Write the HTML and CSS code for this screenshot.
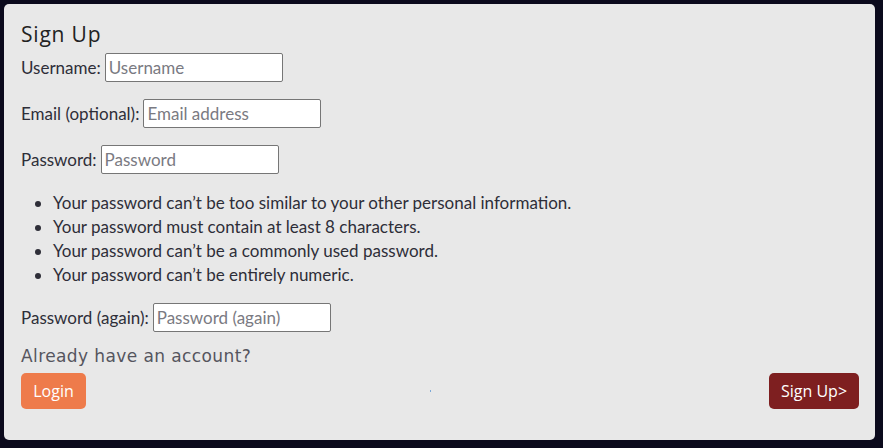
FILE: index.html
```html
<!DOCTYPE html>
<html>
<head>
<meta charset="utf-8">
<link rel="stylesheet" href="styles.css">
</head>
<body>
<div class="card">
  <h2 class="title">Sign Up</h2>
  <form class="form">
    <p class="row"><label>Username:</label> <input type="text" placeholder="Username"></p>
    <p class="row"><label>Email (optional):</label> <input type="text" placeholder="Email address"></p>
    <p class="row"><label>Password:</label> <input type="password" placeholder="Password"></p>
    <ul class="help">
      <li>Your password can’t be too similar to your other personal information.</li>
      <li>Your password must contain at least 8 characters.</li>
      <li>Your password can’t be a commonly used password.</li>
      <li>Your password can’t be entirely numeric.</li>
    </ul>
    <p class="row"><label>Password (again):</label> <input type="password" placeholder="Password (again)"></p>
  </form>
  <p class="already">Already have an account?</p>
  <div class="actions">
    <button class="btn login">Login</button>
    <span class="dot"></span>
    <button class="btn signup">Sign Up&gt;</button>
  </div>
</div>
</body>
</html>
```
FILE: styles.css
```css
html, body { margin: 0; padding: 0; }
body {
  background: #0b0a1c;
  padding: 4px 8px 6px 4px;
  font-family: "Lato", sans-serif;
  color: #2e2e38;
}
.card {
  background: #e8e8e8;
  border-radius: 5px;
  padding: 18px 16px 32px 17px;
  height: 386px;
}
.title {
  font-family: "Open Sans", sans-serif;
  font-weight: 400;
  font-size: 21px;
  letter-spacing: 0.8px;
  margin: 0 0 6px 0;
  line-height: 24px;
  color: #222;
}
.form { margin: 0; }
.row {
  margin: 0 0 16px 0;
  font-size: 17px;
  display: flex;
  align-items: center;
  gap: 4px;
  height: 30px;
}
.row input {
  font-family: "Lato", sans-serif;
  font-size: 17px;
  width: 178px;
  height: 29px;
  box-sizing: border-box;
  border: 1px solid #767676;
  border-radius: 2px;
  padding: 1px 3px;
  background: #fff;
  color: #222;
}
.row input::placeholder { color: #7a7a82; }
.help {
  margin: 0 0 16px 0;
  padding-left: 32px;
  font-size: 17px;
  line-height: 24px;
  position: relative;
  top: 1px;
}
.already {
  font-family: "DejaVu Sans", sans-serif;
  font-size: 17px;
  letter-spacing: 0.4px;
  color: #55555e;
  margin: -3px 0 6px 0;
  line-height: 22px;
}
.actions {
  display: flex;
  justify-content: space-between;
  align-items: center;
}
.btn {
  border: none;
  border-radius: 5px;
  color: #fff;
  font-family: "Open Sans", sans-serif;
  font-size: 16px;
  height: 36px;
  padding: 0;
  white-space: nowrap;
}
.login { background: #ee7b4b; width: 65px; }
.signup { background: #7e1f20; width: 90px; }
.dot {
  width: 1px;
  height: 2px;
  background: #7aa8d8;
  margin-left: 6px;
}
```
